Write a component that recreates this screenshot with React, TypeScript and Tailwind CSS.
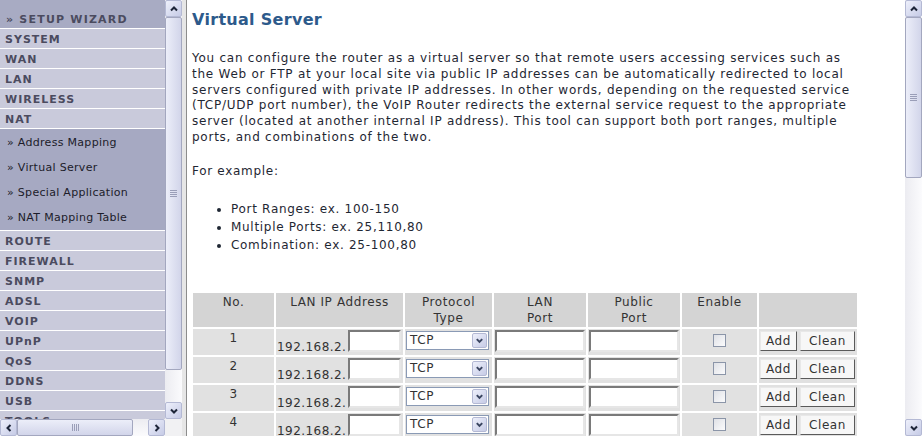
import type { FC } from 'react';

type Dir = 'up' | 'down' | 'left' | 'right';

const chevronPath: Record<Dir, string> = {
  up: 'M2 6.5 L5 3.5 L8 6.5',
  down: 'M2 3.5 L5 6.5 L8 3.5',
  left: 'M6.5 2 L3.5 5 L6.5 8',
  right: 'M3.5 2 L6.5 5 L3.5 8',
};

const ArrowButton: FC<{ dir: Dir }> = ({ dir }) => (
  <div className="flex h-[17px] w-[17px] shrink-0 items-center justify-center rounded-[2px] border border-[#b4b9d4] bg-gradient-to-br from-[#eef0fb] to-[#c6cbe6]">
    <svg width="10" height="10" viewBox="0 0 10 10">
      <path d={chevronPath[dir]} fill="none" stroke="#1d2538" strokeWidth="2" />
    </svg>
  </div>
);

const VScroll: FC<{ thumbClass: string }> = ({ thumbClass }) => (
  <div className="flex h-full w-[17px] shrink-0 flex-col bg-gradient-to-r from-[#ececf1] to-[#fbfbfd]">
    <ArrowButton dir="up" />
    <div className="min-h-0 flex-1">
      <div
        className={`flex w-[17px] flex-col items-center justify-center gap-[1px] rounded-[2px] border border-[#a3a7bf] bg-gradient-to-r from-[#eceef9] to-[#d2d5ea] ${thumbClass}`}
      >
        <div className="h-px w-[7px] bg-[#9a9eb8]" />
        <div className="h-px w-[7px] bg-[#9a9eb8]" />
        <div className="h-px w-[7px] bg-[#9a9eb8]" />
        <div className="h-px w-[7px] bg-[#9a9eb8]" />
      </div>
    </div>
    <ArrowButton dir="down" />
  </div>
);

const mainTop = ['SYSTEM', 'WAN', 'LAN', 'WIRELESS', 'NAT'];
const natSub = ['Address Mapping', 'Virtual Server', 'Special Application', 'NAT Mapping Table'];
const mainBottom = ['ROUTE', 'FIREWALL', 'SNMP', 'ADSL', 'VOIP', 'UPnP', 'QoS', 'DDNS', 'USB', 'TOOLS'];

const MenuItem: FC<{ label: string }> = ({ label }) => (
  <div className="h-[20px] shrink-0 border-b border-white bg-[#c9cadb] pl-[5px] text-[11px] leading-[21px] font-bold tracking-[1px] text-[#4b4b5f]">
    {label}
  </div>
);

const Sidebar: FC = () => (
  <div className="flex h-[436px] w-[182px] shrink-0 flex-col">
    <div className="flex h-[419px] min-h-0">
      <div className="flex w-[165px] flex-col overflow-hidden bg-[#c9cadb]">
        <div className="h-[29px] shrink-0 border-b border-white bg-[#a8abc3] pt-[10px] pl-[6px] text-[11px] leading-[19px] font-bold tracking-[1.2px] text-[#4b4b5f]">
          » SETUP WIZARD
        </div>
        {mainTop.map((m) => (
          <MenuItem key={m} label={m} />
        ))}
        <div className="shrink-0 border-b border-white bg-[#a6a9c2] pt-[1px]">
          {natSub.map((s) => (
            <div key={s} className="h-[25px] pl-[7px] text-[11px] leading-[25px] tracking-[0.3px] text-[#1c1c2a]">
              » {s}
            </div>
          ))}
        </div>
        {mainBottom.map((m) => (
          <MenuItem key={m} label={m} />
        ))}
      </div>
      <VScroll thumbClass="h-[353px]" />
    </div>
    <div className="flex h-[17px]">
      <div className="flex w-[165px] bg-gradient-to-b from-[#ececf1] to-[#fbfbfd]">
        <ArrowButton dir="left" />
        <div className="flex-1">
          <div className="flex h-[17px] w-[116px] items-center justify-center gap-[1px] rounded-[2px] border border-[#a3a7bf] bg-gradient-to-b from-[#eceef9] to-[#d2d5ea]">
            <div className="h-[7px] w-px bg-[#9a9eb8]" />
            <div className="h-[7px] w-px bg-[#9a9eb8]" />
            <div className="h-[7px] w-px bg-[#9a9eb8]" />
            <div className="h-[7px] w-px bg-[#9a9eb8]" />
          </div>
        </div>
        <ArrowButton dir="right" />
      </div>
      <div className="w-[17px] bg-[#f1f1f3]" />
    </div>
  </div>
);

const TextBox: FC<{ className: string }> = ({ className }) => (
  <div
    className={`h-[22px] border-2 border-t-[#7a7a7a] border-r-[#e6e6e6] border-b-[#e6e6e6] border-l-[#7a7a7a] bg-white ${className}`}
  />
);

const Row: FC<{ n: number }> = ({ n }) => (
  <>
    <div className="h-[26px] bg-[#e1e1e1] pt-[1px] text-center leading-[16px]">{n}</div>
    <div className="flex h-[26px] items-start bg-[#e1e1e1] pt-[1px] pl-[1px]">
      <span className="mt-[9px] w-[71px] leading-[16px] tracking-[0.45px]">192.168.2.</span>
      <TextBox className="w-[53px]" />
    </div>
    <div className="h-[26px] bg-[#e1e1e1] pt-[2px] pl-[1px]">
      <div className="flex h-[19px] w-[83px] items-center justify-between border border-[#8a9ab5] bg-white pr-[1px] pl-[3px]">
        <span className="leading-[16px]">TCP</span>
        <div className="flex h-[15px] w-[15px] items-center justify-center rounded-[2px] border border-[#b4b9d4] bg-gradient-to-br from-[#eef0fb] to-[#c6cbe6]">
          <svg width="9" height="9" viewBox="0 0 10 10">
            <path d="M2 3.5 L5 6.5 L8 3.5" fill="none" stroke="#3a4560" strokeWidth="2.2" />
          </svg>
        </div>
      </div>
    </div>
    <div className="h-[26px] bg-[#e1e1e1] pt-[1px] pl-[1px]">
      <TextBox className="w-[90px]" />
    </div>
    <div className="h-[26px] bg-[#e1e1e1] pt-[1px] pl-[1px]">
      <TextBox className="w-[90px]" />
    </div>
    <div className="flex h-[26px] justify-center bg-[#e1e1e1] pt-[5px]">
      <div className="h-[13px] w-[13px] border border-[#8b95a8] bg-gradient-to-br from-[#dfe1e6] to-[#fbfbfc]" />
    </div>
    <div className="flex h-[26px] gap-[3px] bg-[#e1e1e1] pt-[2px] pl-[1px]">
      <div className="flex h-[20px] w-[37px] items-center justify-center border border-t-[#e8e8e8] border-r-[#5a5a5a] border-b-[#5a5a5a] border-l-[#e8e8e8] bg-[#f7f7f7] leading-[16px]">
        Add
      </div>
      <div className="flex h-[20px] w-[55px] items-center justify-center border border-t-[#e8e8e8] border-r-[#5a5a5a] border-b-[#5a5a5a] border-l-[#e8e8e8] bg-[#f7f7f7] leading-[16px]">
        Clean
      </div>
    </div>
  </>
);

const App: FC = () => {
  const headers = ['No.', 'LAN IP Address', 'Protocol\nType', 'LAN\nPort', 'Public\nPort', 'Enable', ''];

  return (
    <div className="flex h-[436px] w-[922px] overflow-hidden bg-white font-['DejaVu_Sans',Verdana,sans-serif]">
      <Sidebar />

      {/* frame divider */}
      <div className="h-full w-[5px] shrink-0 border-r border-[#8c8c8c] bg-[#e6e6e6]" />

      <div className="flex min-w-0 flex-1">
        <div className="min-w-0 flex-1 overflow-hidden pt-[10px] pl-[5px] text-[12px] tracking-[0.7px] text-[#1f2733]">
          <h1 className="text-[16px] leading-[20px] font-bold tracking-[0.3px] text-[#2d5a8b]">Virtual Server</h1>

          <p className="mt-[21px] leading-[15.8px] tracking-[0.75px] whitespace-nowrap">
            You can configure the router as a virtual server so that remote users accessing services such as
            <br />
            the Web or FTP at your local site via public IP addresses can be automatically redirected to local
            <br />
            servers configured with private IP addresses. In other words, depending on the requested service
            <br />
            (TCP/UDP port number), the VoIP Router redirects the external service request to the appropriate
            <br />
            server (located at another internal IP address). This tool can support both port ranges, multiple
            <br />
            ports, and combinations of the two.
          </p>

          <p className="mt-[17px] leading-[16px]">For example:</p>

          <ul className="mt-[21px] ml-[27px] list-disc pl-[12px] leading-[18px]">
            <li>Port Ranges: ex. 100-150</li>
            <li>Multiple Ports: ex. 25,110,80</li>
            <li>Combination: ex. 25-100,80</li>
          </ul>

          <div className="mt-[39px] ml-[1px] grid w-max grid-cols-[81px_127px_87px_92px_92px_75px_98px] gap-[2px] tracking-[0.6px] text-[#333]">
            {headers.map((h, i) => (
              <div key={i} className="h-[34px] bg-[#d4d4d4] pt-[1px] text-center leading-[16px] whitespace-pre-line">
                {h}
              </div>
            ))}
            {[1, 2, 3, 4].map((n) => (
              <Row key={n} n={n} />
            ))}
          </div>
        </div>
        <VScroll thumbClass="h-[161px]" />
      </div>
    </div>
  );
};

export default App;
